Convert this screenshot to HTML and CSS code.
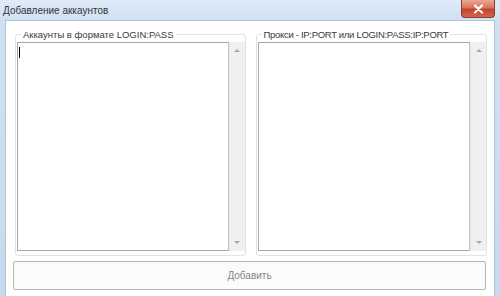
FILE: index.html
```html
<!DOCTYPE html>
<html lang="ru">
<head>
<meta charset="utf-8">
<title>Добавление аккаунтов</title>
<link rel="stylesheet" href="styles.css">
</head>
<body>
<div class="window">
  <div class="titlebar">
    <span class="title">Добавление аккаунтов</span>
    <div class="close">
      <svg width="11" height="10" viewBox="0 0 11 10"><path d="M2 1.5 L9 8.5 M9 1.5 L2 8.5" stroke="#ffffff" stroke-width="2.2" stroke-linecap="round"/></svg>
    </div>
  </div>
  <div class="client">
    <div class="groups">
      <fieldset class="group group-left">
        <legend>Аккаунты в формате LOGIN:PASS</legend>
        <div class="textbox">
          <div class="text"><span class="caret"></span></div>
          <div class="scroll">
            <span class="arrow up"></span>
            <span class="arrow down"></span>
          </div>
        </div>
      </fieldset>
      <fieldset class="group group-right">
        <legend class="legend-tight">Прокси - IP:PORT или LOGIN:PASS:IP:PORT</legend>
        <div class="textbox">
          <div class="text"></div>
          <div class="scroll">
            <span class="arrow up"></span>
            <span class="arrow down"></span>
          </div>
        </div>
      </fieldset>
    </div>
    <div class="button">Добавить</div>
  </div>
</div>
</body>
</html>
```
FILE: styles.css
```css
html, body {
  margin: 0;
  padding: 0;
  width: 500px;
  height: 296px;
  overflow: hidden;
}
body {
  font-family: "Liberation Sans", Arial, sans-serif;
  font-size: 10px;
}
.window {
  width: 500px;
  height: 296px;
  display: flex;
  flex-direction: column;
  background: linear-gradient(to bottom, #dfebf7 0px, #d0e1f3 20px, #c6daef 296px);
}
.titlebar {
  height: 20px;
  display: flex;
  justify-content: space-between;
  align-items: flex-start;
  flex: none;
}
.title {
  margin: 4px 0 0 3px;
  font-size: 10px;
  line-height: 13px;
  color: #333333;
}
.close {
  width: 34px;
  height: 18px;
  margin-right: 5px;
  border: 1px solid #8a3b32;
  border-top: none;
  border-radius: 0 0 4px 4px;
  background: linear-gradient(to bottom, #e8a996 0%, #db735d 45%, #c2432c 55%, #d4654d 100%);
  display: flex;
  align-items: center;
  justify-content: center;
  box-sizing: border-box;
}
.client {
  flex: 1;
  margin: 0 5px;
  background: #ffffff;
  border: 1px solid #b3c3d5;
  border-bottom: none;
  padding: 7px 7px 0 9px;
  display: flex;
  flex-direction: column;
}
.groups {
  display: flex;
  gap: 10px;
}
.group {
  margin: 0;
  padding: 1px 0 4px 1px;
  border: 1px solid #dde3e8;
  border-radius: 3px;
  min-width: 0;
}
.group-left {
  width: 228px;
}
.group-right {
  width: 229px;
}
legend {
  margin-left: 4px;
  padding: 0 2px;
  font-size: 9.5px;
  line-height: 13px;
  color: #3a3a3a;
}
.legend-tight {
  letter-spacing: -0.3px;
}
.textbox {
  display: flex;
  height: 209px;
}
.text {
  flex: 1;
  border: 1px solid #a8a8a8;
  border-right-color: #c4c4c4;
  background: #ffffff;
  position: relative;
}
.caret {
  position: absolute;
  left: 1px;
  top: 4px;
  width: 1px;
  height: 11px;
  background: #000000;
}
.scroll {
  width: 16px;
  flex: none;
  background: #f0f0f0;
  border-left: 1px solid #e8e8e8;
  display: flex;
  flex-direction: column;
  justify-content: space-between;
  align-items: center;
  padding: 7px 0 7px;
  box-sizing: border-box;
}
.arrow {
  width: 0;
  height: 0;
  border-left: 3px solid transparent;
  border-right: 3px solid transparent;
}
.arrow.up {
  border-bottom: 3px solid #a8a8a8;
}
.arrow.down {
  border-top: 3px solid #a8a8a8;
}
.button {
  margin-top: 5px;
  margin-left: -2px;
  width: 473px;
  height: 29px;
  box-sizing: border-box;
  border: 1px solid #b4b4b4;
  border-radius: 2px;
  background: #fbfbfb;
  display: flex;
  align-items: center;
  justify-content: center;
  color: #858585;
  font-size: 10px;
}
```
